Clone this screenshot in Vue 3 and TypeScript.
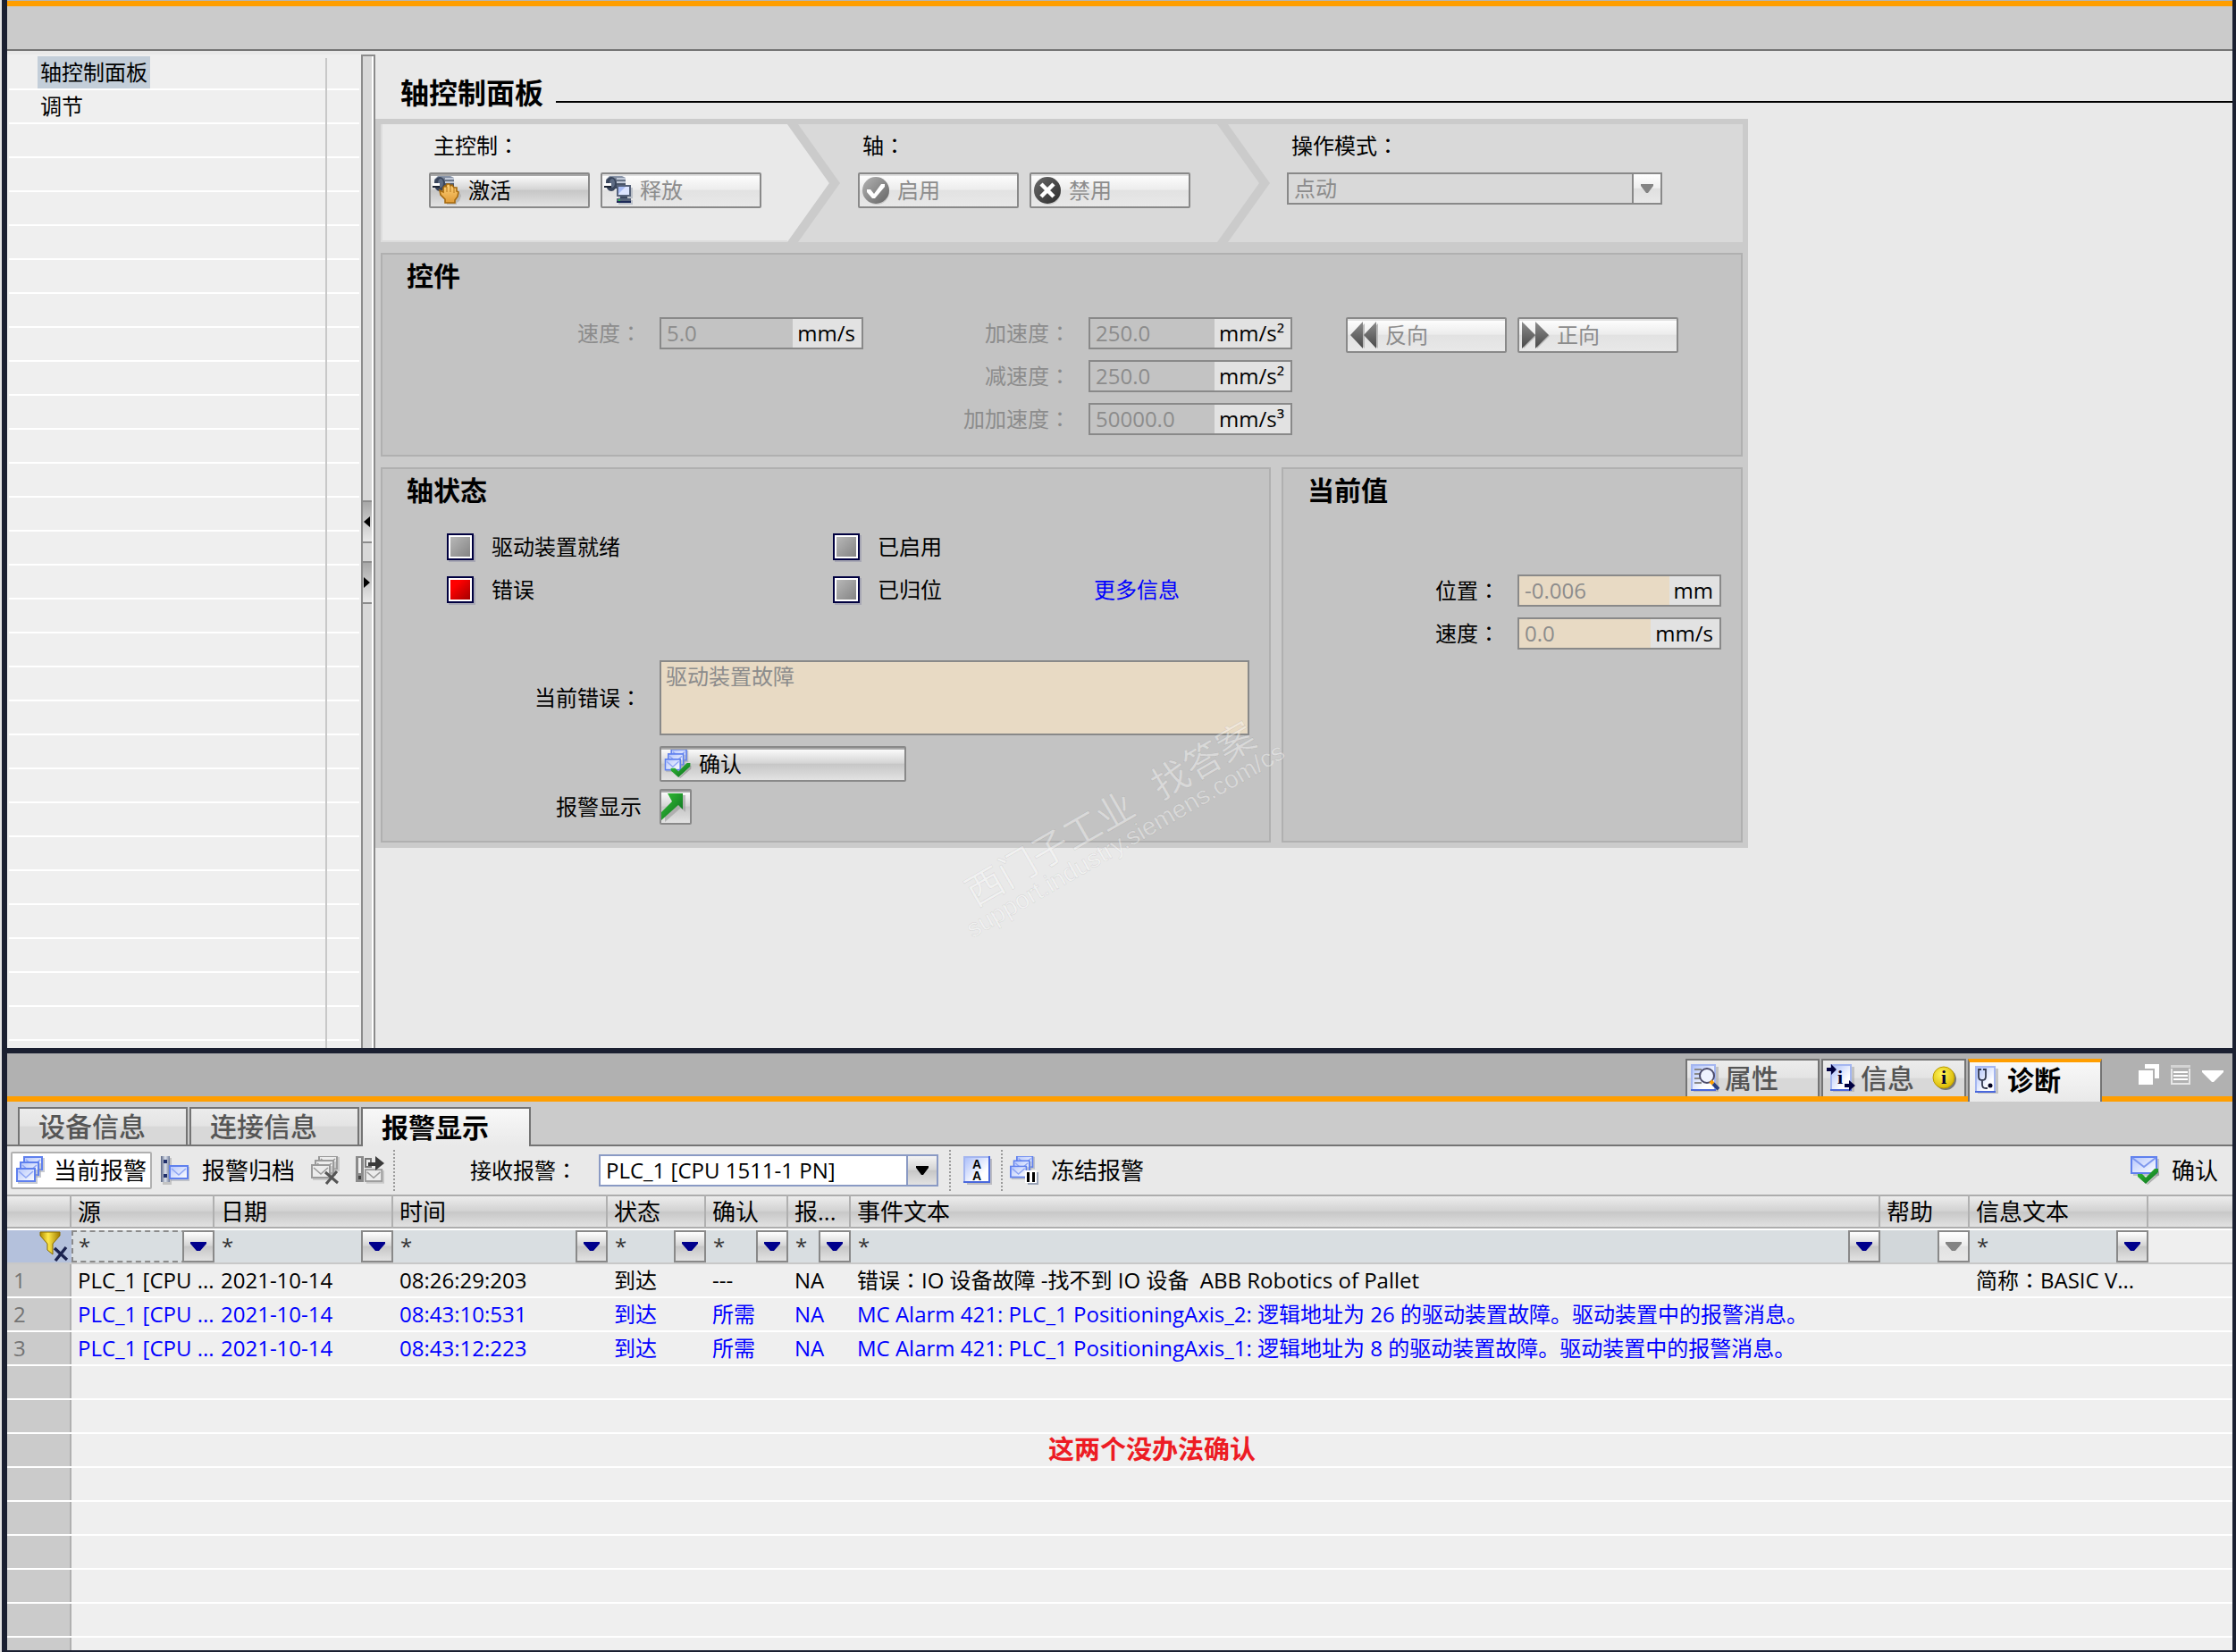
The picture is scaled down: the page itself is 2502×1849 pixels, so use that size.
<script setup lang="ts">
import { h, ref } from 'vue'

/* Text in which the full-width colon is set centred in its em box. */
const Txt = (props: { t: string }) =>
  props.t.split(/(：)/).map((part) => (part === '：' ? h('span', { class: 'cjk-colon' }, part) : part))
Txt.props = ['t']

interface Alarm {
  source: string
  date: string
  time: string
  state: string
  ack: string
  alarmClass: string
  event: string
  info: string
  pending: boolean
}

const navItems = ['轴控制面板', '调节']
const activeNav = ref('轴控制面板')

const dynamics = [
  { id: 'acc', label: '加速度：', value: '250.0', unit: 'mm/s²' },
  { id: 'dec', label: '减速度：', value: '250.0', unit: 'mm/s²' },
  { id: 'jerk', label: '加加速度：', value: '50000.0', unit: 'mm/s³' },
]

const actuals = [
  { id: 'pos', label: '位置：', value: '-0.006', unit: 'mm' },
  { id: 'vel', label: '速度：', value: '0.0', unit: 'mm/s' },
]

const lamps = [
  { id: 'ready', label: '驱动装置就绪', on: false },
  { id: 'enabled', label: '已启用', on: false },
  { id: 'error', label: '错误', on: true },
  { id: 'homed', label: '已归位', on: false },
]

const subTabs = ['设备信息', '连接信息', '报警显示']
const activeSub = ref('报警显示')

const columns = [
  { title: '源', width: '160px', filter: 'focus' },
  { title: '日期', width: '200px', filter: 'on' },
  { title: '时间', width: '240px', filter: 'on' },
  { title: '状态', width: '110px', filter: 'on' },
  { title: '确认', width: '92px', filter: 'on' },
  { title: '报...', width: '70px', filter: 'on' },
  { title: '事件文本', width: 'auto', filter: 'on' },
  { title: '帮助', width: '100px', filter: 'off' },
  { title: '信息文本', width: '200px', filter: 'on' },
]

const alarms: Alarm[] = [
  { source: 'PLC_1 [CPU ...', date: '2021-10-14', time: '08:26:29:203', state: '到达', ack: '---', alarmClass: 'NA', event: '错误：IO 设备故障 -找不到 IO 设备  ABB Robotics of Pallet', info: '简称：BASIC V...', pending: false },
  { source: 'PLC_1 [CPU ...', date: '2021-10-14', time: '08:43:10:531', state: '到达', ack: '所需', alarmClass: 'NA', event: 'MC Alarm 421: PLC_1 PositioningAxis_2: 逻辑地址为 26 的驱动装置故障。驱动装置中的报警消息。', info: '', pending: true },
  { source: 'PLC_1 [CPU ...', date: '2021-10-14', time: '08:43:12:223', state: '到达', ack: '所需', alarmClass: 'NA', event: 'MC Alarm 421: PLC_1 PositioningAxis_1: 逻辑地址为 8 的驱动装置故障。驱动装置中的报警消息。', info: '', pending: true },
]
</script>

<template>
  <div class="app">
    <svg class="defs" aria-hidden="true">
      <defs>
        <linearGradient id="g-env" x1="0" y1="0" x2="1" y2="1"><stop offset="0" stop-color="#b4c5fb" /><stop offset="1" stop-color="#ffffff" /></linearGradient>
        <linearGradient id="g-page" x1="0" y1="0" x2="1" y2="1"><stop offset="0" stop-color="#a9bdfa" /><stop offset="0.7" stop-color="#ffffff" /></linearGradient>
        <linearGradient id="g-motor" x1="0" y1="0" x2="0" y2="1"><stop offset="0" stop-color="#8c98ac" /><stop offset="1" stop-color="#2c3648" /></linearGradient>
        <linearGradient id="g-hand" x1="0" y1="0" x2="0" y2="1"><stop offset="0" stop-color="#ffd27a" /><stop offset="1" stop-color="#e09c38" /></linearGradient>
        <linearGradient id="g-grey" x1="0" y1="0" x2="1" y2="1"><stop offset="0" stop-color="#b4b4b4" /><stop offset="1" stop-color="#646464" /></linearGradient>
        <linearGradient id="g-dark" x1="0" y1="0" x2="1" y2="1"><stop offset="0" stop-color="#6a6a6a" /><stop offset="1" stop-color="#2c2c2c" /></linearGradient>
        <linearGradient id="g-wind" x1="0" y1="0" x2="0" y2="1"><stop offset="0" stop-color="#8c8c8c" /><stop offset="1" stop-color="#484848" /></linearGradient>
        <linearGradient id="g-green" x1="0" y1="0" x2="1" y2="1"><stop offset="0" stop-color="#35c435" /><stop offset="1" stop-color="#0a6a20" /></linearGradient>
        <linearGradient id="g-rack" x1="0" y1="0" x2="1" y2="0"><stop offset="0" stop-color="#5a6684" /><stop offset="0.5" stop-color="#dfe4ee" /><stop offset="1" stop-color="#6f7b98" /></linearGradient>
        <linearGradient id="g-gold" x1="0" y1="0" x2="1" y2="0"><stop offset="0" stop-color="#b08c00" /><stop offset="0.4" stop-color="#ffe94a" /><stop offset="1" stop-color="#a07c00" /></linearGradient>
        <radialGradient id="g-badge" cx="0.4" cy="0.35" r="0.7"><stop offset="0" stop-color="#fff75a" /><stop offset="1" stop-color="#d8b400" /></radialGradient>
      </defs>
      <symbol id="motor" viewBox="0 0 32 32">
        <path d="M6 0h14l4 2v12H6l-4-3V4z" fill="url(#g-motor)" />
        <path d="M14 2h10v2H14zM14 6h10v2H14z" fill="#c2cad8" />
        <ellipse cx="8" cy="9" rx="6" ry="8" fill="#3a465c" />
        <ellipse cx="9" cy="8" rx="3" ry="5" fill="#5e6c84" />
        <path d="M0 8h8v3H0z" fill="#fff" />
        <path d="M0 11h8v2H0z" fill="#1c2434" />
      </symbol>
      <symbol id="hand" viewBox="0 0 32 32">
        <path d="M14 32v-3l-6-6 1-4 3 2 0-7 2-2 2 2 1-3 3 0 1 2 3-1 1 4 3 2 2 4-2 6-3 2v2z" fill="#8a8a8a" opacity="0.4" transform="translate(2 0)" />
        <path d="M14 30v-4l-5-5-1-5 4 2 0-5 2-2 1 1 1-3 3 0 1 2 2-1 2 3 3 0 0 4 2 1-1 5-3 4v3z" fill="url(#g-hand)" stroke="#a5690e" stroke-width="1.6" />
        <path d="M16 12v6M20 11v7M24 13v6" stroke="#c08428" stroke-width="1.2" />
      </symbol>
      <symbol id="pc" viewBox="0 0 32 32">
        <path d="M16 13h16v12H16zM16 27h16v5H16z" fill="#aab0bc" opacity="0.7" />
        <rect x="15" y="11" width="14" height="11" fill="#dce4ff" stroke="#56627a" stroke-width="2" />
        <path d="M16 12h8l-8 8z" fill="#a9bdf5" />
        <path d="M18 23h8v2h-8z" fill="#3c4860" />
        <path d="M14 25h16v5H14z" fill="#56627a" /><path d="M14 28h16v2H14z" fill="#1d2a58" /><path d="M16 26h2v2h-2z" fill="#22c04a" />
      </symbol>
      <symbol id="letter" viewBox="0 0 24 18">
        <path d="M2 2h22v16H2z" fill="#a4a8b4" opacity="0.6" />
        <rect x="1" y="1" width="20" height="14" fill="url(#g-env)" stroke="#5f80ee" stroke-width="2" />
        <path d="M3 4l8 7 8-7" fill="none" stroke="#8fa6f4" stroke-width="1.6" />
      </symbol>
      <symbol id="letter-grey" viewBox="0 0 24 18">
        <path d="M2 2h22v16H2z" fill="#b4b4b4" opacity="0.6" />
        <rect x="1" y="1" width="20" height="14" fill="#ececec" stroke="#9a9a9a" stroke-width="2" />
        <path d="M3 4l8 7 8-7" fill="none" stroke="#9a9a9a" stroke-width="1.6" />
      </symbol>
      <symbol id="stack" viewBox="0 0 32 32">
        <use href="#letter" x="8" y="0" width="24" height="18" />
        <use href="#letter" x="4" y="6" width="24" height="18" />
        <use href="#letter" x="0" y="13" width="24" height="18" />
      </symbol>
      <symbol id="stack-grey" viewBox="0 0 32 32">
        <use href="#letter-grey" x="8" y="0" width="24" height="18" />
        <use href="#letter-grey" x="4" y="5" width="24" height="18" />
        <use href="#letter-grey" x="0" y="10" width="24" height="18" />
      </symbol>
      <symbol id="tick" viewBox="0 0 24 18">
        <path d="M2 8l8 9L24 3v4L11 18 4 12z" fill="#888" opacity="0.6" />
        <path d="M0 6h5l4 4L19 0h4v4L9 17 0 9z" fill="url(#g-green)" />
      </symbol>
    </svg>

    <header class="topbar"></header>

    <div class="editor">
      <nav class="sidebar">
        <ul>
          <li v-for="item in navItems" :key="item">
            <a href="#" :class="{ current: item === activeNav }" @click.prevent="activeNav = item">{{ item }}</a>
          </li>
        </ul>
      </nav>
      <div class="splitter">
        <button type="button" aria-label="Collapse left"><svg width="8" height="12"><path d="M8 0v12L1 6z" /></svg></button>
        <button type="button" aria-label="Collapse right"><svg width="8" height="12"><path d="M1 0v12l7-6z" /></svg></button>
      </div>

      <main class="main">
        <div class="title">
          <h1>轴控制面板</h1>
          <span class="rule"></span>
        </div>

        <div class="workspace">
          <div class="banner">
            <svg class="chevrons" viewBox="0 0 1524 132" preserveAspectRatio="none" aria-hidden="true">
              <path d="M0 0h1524v132H0z" fill="#d9d9d9" />
              <path d="M0 0h455l47 66-47 66H0z" fill="#e9e9e9" />
              <path d="M455 0h12l47 66-47 66h-12l47-66zM936 0h12l47 66-47 66h-12l47-66z" fill="#cbcbcb" />
              <path d="M0 131h455M1 0v132" stroke="#dcdcdc" stroke-width="2" />
            </svg>
            <section class="step">
              <p><Txt t="主控制：" /></p>
              <div class="controls">
                <button type="button" class="btn">
                  <svg class="ic" viewBox="0 0 32 32"><use href="#motor" /><use href="#hand" /></svg>激活
                </button>
                <button type="button" class="btn" disabled>
                  <svg class="ic" viewBox="0 0 32 32"><use href="#motor" /><use href="#pc" /></svg>释放
                </button>
              </div>
            </section>
            <section class="step">
              <p><Txt t="轴：" /></p>
              <div class="controls">
                <button type="button" class="btn" disabled>
                  <svg class="ic" viewBox="0 0 32 32"><circle cx="17" cy="18" r="14" fill="#aaa" opacity="0.5" /><circle cx="16" cy="16" r="15" fill="url(#g-grey)" /><path d="M6 15h4l4 5 8-11h4v3L15 25h-3L6 18z" fill="#fff" /></svg>启用
                </button>
                <button type="button" class="btn" disabled>
                  <svg class="ic" viewBox="0 0 32 32"><circle cx="17" cy="18" r="14" fill="#aaa" opacity="0.5" /><circle cx="16" cy="16" r="15" fill="url(#g-dark)" /><path d="M9 9l14 14M23 9L9 23" stroke="#fff" stroke-width="4.5" /></svg>禁用
                </button>
              </div>
            </section>
            <section class="step">
              <label for="mode"><Txt t="操作模式：" /></label>
              <div class="controls">
                <div class="combo mode">
                  <select id="mode" disabled><option>点动</option></select>
                  <span class="drop"><svg width="14" height="10"><path d="M0 0h14v2L8 10H6L0 2z" fill="#848484" /></svg></span>
                </div>
              </div>
            </section>
          </div>

          <section class="panel">
            <h2>控件</h2>
            <div class="jog">
              <div class="fields speed">
                <div class="field dim">
                  <label for="speed"><Txt t="速度：" /></label>
                  <div class="value"><input id="speed" value="5.0" disabled /><span>mm/s</span></div>
                </div>
              </div>
              <div class="fields dyn">
                <div v-for="f in dynamics" :key="f.id" class="field dim">
                  <label :for="f.id"><Txt :t="f.label" /></label>
                  <div class="value"><input :id="f.id" :value="f.value" disabled /><span>{{ f.unit }}</span></div>
                </div>
              </div>
              <div class="controls moves">
                <button type="button" class="btn" disabled>
                  <svg class="ic" viewBox="0 0 32 32"><path d="M17 3v28L3 17zM32 3v28L18 17z" fill="#bbb" /><path d="M15 1v30L1 16zM30 1v30L16 16z" fill="url(#g-wind)" /></svg>反向
                </button>
                <button type="button" class="btn" disabled>
                  <svg class="ic" viewBox="0 0 32 32"><path d="M3 3v28l14-14zM18 3v28l14-14z" fill="#bbb" /><path d="M1 1v30l15-15zM16 1v30l15-15z" fill="url(#g-wind)" /></svg>正向
                </button>
              </div>
            </div>
          </section>

          <div class="row">
            <section class="panel status">
              <h2>轴状态</h2>
              <div class="lamps">
                <div v-for="l in lamps" :key="l.id" class="lamp">
                  <input :id="l.id" type="checkbox" :checked="l.on" disabled />
                  <label :for="l.id">{{ l.label }}</label>
                </div>
                <a href="#" class="more" @click.prevent>更多信息</a>
              </div>
              <div class="line error">
                <label for="current-error"><Txt t="当前错误：" /></label>
                <textarea id="current-error" readonly value="驱动装置故障"></textarea>
              </div>
              <div class="line confirm">
                <span class="lead"></span>
                <button type="button" class="btn wide">
                  <svg class="ic" viewBox="0 0 32 32"><use href="#stack" y="-1" height="27" width="30" /><use href="#tick" x="8" y="15" width="24" height="17" /></svg>确认
                </button>
              </div>
              <div class="line">
                <span id="alarm-view" class="lead">报警显示</span>
                <button type="button" class="btn square" aria-labelledby="alarm-view">
                  <svg width="32" height="36" viewBox="0 0 32 36"><path d="M9 5h18v19l-5-5L4 35v-7l12-13z" fill="#999" opacity="0.6" /><path d="M7 3h17v18l-5-5L0 33v-9l12-12z" fill="url(#g-green)" /></svg>
                </button>
              </div>
            </section>

            <section class="panel actual">
              <h2>当前值</h2>
              <div class="fields">
                <div v-for="f in actuals" :key="f.id" class="field">
                  <label :for="f.id"><Txt :t="f.label" /></label>
                  <div class="value tan"><input :id="f.id" :value="f.value" disabled /><span>{{ f.unit }}</span></div>
                </div>
              </div>
            </section>
          </div>
        </div>

        <div class="watermark">
          <p><span>西门子工业</span><span>找答案</span></p>
          <p class="url">support.industry.siemens.com/cs</p>
        </div>
      </main>
    </div>

    <section class="inspector">
      <div class="views">
        <button type="button" class="view props">
          <svg class="ic" viewBox="0 0 32 32"><path d="M3 3h28v28H3z" fill="#a8a8a8" opacity="0.6" /><path d="M1 1h26v28H1z" fill="url(#g-page)" stroke="#a4b6f0" stroke-width="2" /><path d="M0 28h28v2H0z" fill="#4a68dc" /><path d="M4 6h8M4 11h6M4 16h6M4 21h8" stroke="#888" stroke-width="2" /><circle cx="18" cy="13" r="8" fill="#eef2ff" stroke="#4a4a6a" stroke-width="2" /><path d="M22 19l3 3" stroke="#ffa000" stroke-width="4" /><path d="M25 22l6 6" stroke="#2a4080" stroke-width="4" /></svg>属性
        </button>
        <button type="button" class="view info">
          <svg class="ic" viewBox="0 0 32 32"><path d="M7 3h24v28H7z" fill="#a8a8a8" opacity="0.6" /><path d="M5 1h22v28H5z" fill="url(#g-page)" stroke="#a4b6f0" stroke-width="2" /><path d="M4 28h24v2H4z" fill="#4a68dc" /><path d="M0 4h5V0l6 6-6 6V8H0zM20 22h5v-4l7 6-7 6v-4h-5z" fill="#000040" /><text x="12" y="22" class="serif-i">i</text></svg>信息
          <svg class="badge" width="28" height="28" viewBox="0 0 28 28"><circle cx="15" cy="15" r="12" fill="#777" /><circle cx="13" cy="13" r="12" fill="url(#g-badge)" stroke="#b89a00" /><text x="10" y="20" class="serif-i">i</text></svg>
        </button>
        <button type="button" class="view diag">
          <svg class="ic" viewBox="0 0 32 32"><path d="M3 3h23v28H3z" fill="#a8a8a8" opacity="0.6" /><path d="M1 1h21v28H1z" fill="url(#g-page)" stroke="#a4b6f0" stroke-width="2" /><path d="M0 28h23v2H0z" fill="#4a68dc" /><path d="M7 4H4v8q0 4 4 4t4-4V4H9M8 16v5q0 4 4 4h2" fill="none" stroke="#333a50" stroke-width="1.8" /><circle cx="17" cy="22" r="2.5" fill="#000020" /></svg>诊断
        </button>
        <div class="win">
          <svg width="24" height="24"><path d="M8 0h16v16h-5V5H8z" fill="#fff" /><path d="M1 7h16v16H1z" fill="#fff" /></svg>
          <svg width="24" height="24"><path d="M1 1h22v3H1z" fill="#d4d4d4" /><path d="M2 5v17h20V5" fill="none" stroke="#e6e6e6" stroke-width="2" /><path d="M4 9h16M4 13h16M4 17h16" stroke="#fff" stroke-width="2" /></svg>
          <svg width="24" height="24"><path d="M0 7h24v2L13 20h-2L0 9z" fill="#fff" /></svg>
        </div>
      </div>

      <div class="subtabs">
        <button v-for="t in subTabs" :key="t" type="button" :class="{ on: t === activeSub }" @click="activeSub = t">{{ t }}</button>
      </div>

      <div class="toolbar">
        <button type="button" class="tool pressed"><svg class="ic" viewBox="0 0 32 32"><use href="#stack" /></svg>当前报警</button>
        <button type="button" class="tool"><svg class="ic" viewBox="0 0 32 32"><path d="M2 2h10v30H2z" fill="#aaa" opacity="0.6" /><path d="M0 0h10v29H0z" fill="url(#g-rack)" /><path d="M3 4h4v4H3zM3 20h4v4H3z" fill="#20306c" /><use href="#letter" x="9" y="10" width="24" height="18" /></svg>报警归档</button>
        <button type="button" class="tool icon" disabled aria-label="Empty archive"><svg class="ic" viewBox="0 0 32 32"><use href="#stack-grey" y="-1" /><path d="M16 18l14 12M29 17L17 31" stroke="#555" stroke-width="3" /></svg></button>
        <button type="button" class="tool icon" disabled aria-label="Export archive"><svg class="ic" viewBox="0 0 32 32"><path d="M0 0h9v29H0z" fill="#8a8a8a" /><path d="M3 2h3v17H3z" fill="#eee" /><path d="M3 22h3v4H3z" fill="#444" /><path d="M11 3h6v9h-6z" fill="none" stroke="#777" stroke-width="2" /><use href="#letter-grey" x="10" y="14" width="22" height="17" /><path d="M14 7h8V0l10 8-10 8v-5h-8z" fill="#3a3a3a" /></svg></button>
        <i class="sep"></i>
        <label class="recv" for="receive"><Txt t="接收报警：" /></label>
        <div class="combo plc">
          <select id="receive"><option>PLC_1 [CPU 1511-1 PN]</option></select>
          <span class="drop"><svg width="14" height="10"><path d="M0 0h14v2L8 10H6L0 2z" fill="#000" /></svg></span>
        </div>
        <i class="sep"></i>
        <button type="button" class="tool icon aa" aria-label="Sort"><svg class="ic" viewBox="0 0 32 32"><path d="M4 3h28v29H4z" fill="#a8a8b0" opacity="0.7" /><path d="M1 1h28v28H1z" fill="url(#g-page)" stroke="#a4b6f0" stroke-width="2" /><path d="M28 0h2v30H0v-2h28z" fill="#4a68dc" /><text x="15" y="14" class="aa-text">A</text><text x="15" y="27" class="aa-text">A</text></svg></button>
        <i class="sep"></i>
        <button type="button" class="tool freeze"><svg class="ic" viewBox="0 0 32 32"><use href="#stack" y="-1" width="28" height="28" /><path d="M20 18h12v14H20z" fill="#9aa4b8" /><path d="M17 16h13v14H17z" fill="#fff" /><path d="M19 18h3v11h-3zM25 18h3v11h-3z" fill="#000" /></svg>冻结报警</button>
        <span class="spring"></span>
        <button type="button" class="tool ack"><svg class="ic" viewBox="0 0 32 32"><path d="M3 3h29v19H3z" fill="#a4a8b4" opacity="0.6" /><path d="M1 1h28v18H1z" fill="url(#g-env)" stroke="#5f80ee" stroke-width="2" /><path d="M2 2l13 10L28 2" fill="none" stroke="#7f98ee" stroke-width="2" /><use href="#tick" x="8" y="14" width="24" height="18" /></svg>确认</button>
      </div>

      <div class="grid">
        <table>
          <colgroup>
            <col class="num" />
            <col v-for="c in columns" :key="c.title" :style="{ width: c.width }" />
            <col class="rest" />
          </colgroup>
          <thead>
            <tr class="heads">
              <th></th>
              <th v-for="c in columns" :key="c.title" scope="col"><div>{{ c.title }}</div></th>
              <th class="end"></th>
            </tr>
            <tr class="filters">
              <td class="funnel">
                <svg width="34" height="34" viewBox="0 0 34 34"><path d="M1 1h22v4l-8 9v12l-6-5v-7L1 5z" fill="url(#g-gold)" stroke="#8a6c00" /><path d="M17 19l14 13M30 18L18 33" stroke="#1c2450" stroke-width="3.4" /></svg>
              </td>
              <td v-for="c in columns" :key="c.title" :class="c.filter">
                <div class="filter">
                  <input :value="c.filter === 'off' ? '' : '*'" :aria-label="c.title" :disabled="c.filter === 'off'" />
                  <button type="button" :disabled="c.filter === 'off'" :aria-label="c.title">
                    <svg width="18" height="10"><path d="M0 0h18v2L11 10H7L0 2z" /></svg>
                  </button>
                </div>
              </td>
              <td class="end"></td>
            </tr>
          </thead>
          <tbody>
            <tr v-for="(a, i) in alarms" :key="i" :class="{ pending: a.pending }">
              <td class="no">{{ i + 1 }}</td>
              <td>{{ a.source }}</td>
              <td>{{ a.date }}</td>
              <td>{{ a.time }}</td>
              <td>{{ a.state }}</td>
              <td>{{ a.ack }}</td>
              <td>{{ a.alarmClass }}</td>
              <td><Txt :t="a.event" /></td>
              <td></td>
              <td><Txt :t="a.info" /></td>
              <td></td>
            </tr>
          </tbody>
        </table>
        <p class="note">这两个没办法确认</p>
      </div>
    </section>
  </div>
</template>

<style>
body {
  background: #1b2031;
}
.cjk-colon {
  font-family: "Noto Sans CJK TC", sans-serif;
  line-height: 0;
}
</style>

<style scoped>
.app {
  box-sizing: border-box;
  min-height: 100vh;
  display: flex;
  flex-direction: column;
  padding: 0 4px 2px 6px;
  border-left: 2px solid #e4e4e4;
  background: #1b2031;
  font: 24px/36px "Open Sans", "Noto Sans CJK SC", sans-serif;
  color: #000;
}
.app *,
.app *::before {
  box-sizing: border-box;
}
.defs {
  position: absolute;
  width: 0;
  height: 0;
}
button,
input,
select,
textarea {
  font: inherit;
  color: inherit;
  margin: 0;
  padding: 0;
  border: 0;
  border-radius: 0;
  background: none;
}
h1,
h2,
p,
ul {
  margin: 0;
  padding: 0;
}
.ic {
  width: 32px;
  height: 32px;
  flex: none;
}

.topbar {
  height: 57px;
  border-top: 1px solid #b4b4b4;
  border-bottom: 2px solid #747474;
  background: #cbcbcb;
  box-shadow: inset 0 6px #ff9e00;
}
.editor {
  flex: 1;
  display: flex;
  background: #e9e9e9;
}

.sidebar {
  width: 396px;
  margin-top: 4px;
  padding: 2px;
  padding-bottom: 0;
  display: flex;
  background: #efefef;
}
.sidebar ul {
  flex: 1;
  list-style: none;
  background:
    linear-gradient(#c8c8c8, #c8c8c8) 354px 2px / 2px 100% no-repeat,
    repeating-linear-gradient(transparent 0 36px, #fff 36px 38px);
}
.sidebar li {
  height: 38px;
  padding-left: 32px;
}
.sidebar a {
  display: inline-block;
  height: 36px;
  line-height: 36px;
  padding: 0 3px;
  color: #000;
  text-decoration: none;
}
.sidebar a.current {
  background: #c3ced9;
}
.splitter {
  width: 16px;
  margin-top: 4px;
  display: flex;
  flex-direction: column;
  justify-content: center;
  gap: 20px;
  padding-right: 2px;
  border: 2px solid #8c8c8c;
  border-bottom: 0;
  background: linear-gradient(to right, #d8d8d8 10px, #fff 10px);
}
.splitter button {
  height: 48px;
  display: flex;
  align-items: center;
  border: solid #8c8c8c;
  border-width: 2px 0;
  background: linear-gradient(#a8a8a8, #e8e8e8);
}

.main {
  flex: 1;
  position: relative;
}
.title {
  display: flex;
  height: 76px;
  padding: 26px 0 0 28px;
  gap: 14px;
}
.title h1 {
  font-size: 32px;
  line-height: 42px;
}
.rule {
  flex: 1;
  height: 2px;
  margin-top: 30px;
  background: #000;
}
.workspace {
  width: 1536px;
  padding: 6px;
  display: flex;
  flex-direction: column;
  gap: 12px;
  background: #cbcbcb;
}
.banner {
  position: relative;
  height: 132px;
  display: flex;
  padding-left: 54px;
}
.chevrons {
  position: absolute;
  inset: 0;
  width: 100%;
  height: 100%;
}
.step {
  position: relative;
  width: 480px;
  padding-top: 6px;
}
.step p,
.step label {
  display: block;
  padding-left: 5px;
  margin-bottom: 12px;
}
.controls {
  display: flex;
  gap: 12px;
}
.btn {
  width: 180px;
  height: 40px;
  display: flex;
  align-items: center;
  gap: 8px;
  padding-left: 2px;
  line-height: 32px;
  border: 2px solid #898989;
  border-radius: 2px;
  background: linear-gradient(#fff, #d4d4d4 48%, #c6c6c6 50%, #e2e2e2);
  box-shadow: inset 0 2px #a8a8a8;
}
.btn:disabled {
  color: #8c8c8c;
  background: linear-gradient(#fff, #ececec 48%, #e2e2e2 50%, #e8e8e8);
  box-shadow: inset 0 2px #e0e0e0;
}
.btn.wide {
  width: 276px;
}
.btn.square {
  width: 36px;
  padding: 0;
}
.combo {
  display: flex;
  height: 36px;
  border: 2px solid #898989;
}
.combo select {
  flex: 1;
  appearance: none;
  padding-left: 6px;
  line-height: 32px;
  opacity: 1;
}
.combo .drop {
  width: 34px;
  display: flex;
  align-items: center;
  justify-content: center;
  border-left: 2px solid #898989;
  background: linear-gradient(#fff, #eee 48%, #e0e0e0 50%, #e8e8e8);
}
.mode {
  width: 420px;
  color: #8c8c8c;
}
.mode .drop {
  width: 32px;
}

.panel {
  border: 2px solid #b0b0b0;
  background: #c3c3c3;
  padding-top: 4px;
}
.panel h2 {
  padding-left: 27px;
  font-size: 30px;
  line-height: 40px;
}
.jog {
  display: flex;
  padding: 26px 0 22px;
}
.fields {
  display: flex;
  flex-direction: column;
  gap: 12px;
}
.speed {
  width: 538px;
}
.dyn {
  width: 480px;
}
.moves {
  margin-left: 60px;
}
.field {
  height: 36px;
  display: flex;
  justify-content: flex-end;
  gap: 20px;
}
.dim label {
  color: #8c8c8c;
}
.value {
  width: 228px;
  height: 36px;
  display: flex;
  border: 2px solid #898989;
  line-height: 32px;
}
.value input {
  flex: 1;
  min-width: 0;
  padding-left: 6px;
  color: #8c8c8c;
}
.value span {
  padding: 0 7px 0 5px;
  background: #e2e2e2;
}
.tan input {
  background: #e8dac4;
}
.row {
  display: flex;
  gap: 12px;
  height: 420px;
}
.status {
  flex: 1;
}
.actual {
  width: 516px;
}
.actual .fields {
  padding: 74px 22px 0 0;
}
.lamps {
  display: grid;
  grid-template-columns: 432px 292px auto;
  grid-template-rows: 30px 30px;
  row-gap: 18px;
  padding: 28px 0 0 72px;
}
.lamp {
  display: flex;
  align-items: center;
  gap: 20px;
  line-height: 30px;
}
.lamp:nth-child(3) {
  grid-area: 2 / 1;
}
.lamp:nth-child(4) {
  grid-area: 2 / 2;
}
.more {
  grid-area: 2 / 3;
  line-height: 30px;
  color: #0000ff;
  text-decoration: none;
}
.lamp input {
  appearance: none;
  width: 30px;
  height: 30px;
  border: 2px solid #000040;
  box-shadow: inset 0 0 0 2px #fff, 2px 2px #a8a8b4;
  background: linear-gradient(135deg, #bcbcbc, #808080);
}
.lamp input:checked {
  background: linear-gradient(135deg, #ff0000 30%, #980000);
}
.line {
  display: flex;
  align-items: center;
  gap: 20px;
}
.line label,
.lead {
  width: 290px;
  text-align: right;
}
.error {
  margin-top: 64px;
}
.error textarea {
  width: 660px;
  height: 84px;
  padding: 0 5px;
  line-height: 32px;
  resize: none;
  border: 2px solid #898989;
  background: #e8dac4;
  color: #8c8c8c;
}
.confirm {
  margin: 12px 0 8px;
}

.watermark {
  position: absolute;
  left: 631px;
  top: 833px;
  width: 400px;
  height: 72px;
  transform: rotate(-30deg);
  color: rgba(255, 255, 255, 0.4);
  -webkit-text-stroke: 1px rgba(0, 0, 0, 0.07);
  pointer-events: none;
}
.watermark p {
  display: flex;
  justify-content: center;
  gap: 30px;
  font-size: 42px;
  line-height: 36px;
  white-space: nowrap;
}
.watermark .url {
  font: 28px/34px "Liberation Sans", sans-serif;
}

.inspector {
  height: 674px;
  display: flex;
  flex-direction: column;
  border-top: 6px solid #1b2031;
  background: #e9e9e9;
}
.views {
  height: 54px;
  padding-top: 6px;
  display: flex;
  justify-content: flex-end;
  align-items: flex-start;
  gap: 2px;
  background: linear-gradient(#b1b1b1 48px, #ff9e00 48px);
}
.view {
  height: 42px;
  display: flex;
  align-items: center;
  gap: 6px;
  padding-left: 4px;
  border: 2px solid #747474;
  border-bottom: 0;
  background: linear-gradient(#ececec, #e4e4e4 48%, #d8d8d8 50%);
  color: #555;
  font-size: 30px;
  font-weight: 500;
  line-height: 38px;
}
.props {
  width: 150px;
}
.info {
  width: 162px;
}
.diag {
  width: 150px;
  height: 48px;
  gap: 4px;
  padding: 0 0 4px 6px;
  border-top: 4px solid #ff9e00;
  background: linear-gradient(#f8f8f8, #e9e9e9);
  color: #000;
  font-weight: 700;
}
.badge {
  margin-left: 14px;
}
.serif-i {
  font: bold 22px "Liberation Serif", serif;
  fill: #000030;
}
.win {
  display: flex;
  gap: 12px;
  margin: 6px 10px 0 38px;
}
.subtabs {
  height: 50px;
  padding: 6px 0 0 12px;
  display: flex;
  gap: 2px;
  border-bottom: 2px solid #747474;
  background: #cbcbcb;
}
.subtabs button {
  width: 190px;
  height: 42px;
  padding-left: 21px;
  text-align: left;
  border: 2px solid #747474;
  border-bottom: 0;
  background: linear-gradient(#ececec, #e4e4e4 48%, #d8d8d8 50%);
  color: #555;
  font-size: 30px;
  font-weight: 500;
  line-height: 38px;
}
.subtabs button.on {
  height: 44px;
  background: linear-gradient(#f8f8f8, #e9e9e9);
  color: #000;
  font-weight: 700;
}

.toolbar {
  flex: none;
  height: 54px;
  padding-left: 4px;
  display: flex;
  align-items: center;
}
.tool {
  height: 42px;
  display: flex;
  align-items: center;
  gap: 14px;
  padding-left: 10px;
  font-size: 26px;
}
.tool.icon {
  padding: 0;
  margin-left: 18px;
}
.tool.pressed {
  width: 158px;
  padding-left: 4px;
  gap: 10px;
  border: 2px solid #b0b0b0;
  border-radius: 2px;
  background: #fff;
}
.tool.aa {
  margin-left: 14px;
}
.tool.freeze {
  padding-left: 8px;
}
.tool.ack {
  padding-right: 16px;
}
.aa-text {
  font: bold 14px "Liberation Sans", sans-serif;
  text-anchor: middle;
}
.sep {
  height: 46px;
  border-left: 2px dotted #9a9a9a;
}
.icon + .sep {
  margin-left: 10px;
}
.recv {
  margin: 0 24px 0 84px;
}
.plc {
  width: 380px;
  margin-right: 12px;
  border-color: #8a9ac4;
  background: #fff;
}
.plc .drop {
  background: linear-gradient(#f4f4f4, #d4d4d4 48%, #c6c6c6 50%, #e2e2e2);
  border-left-color: #8a9ac4;
}
.spring {
  flex: 1;
}

.grid {
  flex: 1;
  position: relative;
  overflow: hidden;
  background:
    repeating-linear-gradient(#fff 0 2px, transparent 2px 38px),
    linear-gradient(to right, #cbcbcb 70px, #b0b0b0 70px 72px, #efefef 72px);
}
table {
  width: 100%;
  table-layout: fixed;
  border-collapse: separate;
  border-spacing: 0;
}
.num {
  width: 72px;
}
.rest {
  width: 94px;
}
th,
td {
  padding: 0;
  height: 38px;
  text-align: left;
  white-space: pre;
}
.heads th {
  height: 40px;
  border-bottom: 2px solid #fff;
  font-size: 26px;
  font-weight: 400;
  background: linear-gradient(#f0f0f0, #d2d2d2 48%, #c8c8c8 52%, #e4e4e4);
  box-shadow: inset -2px 0 #b0b0b0, inset 0 2px #adadad, inset 0 -2px #adadad;
}
.heads .end {
  box-shadow: inset 0 2px #adadad, inset 0 -2px #adadad;
}
.heads div {
  padding-left: 7px;
  line-height: 38px;
  overflow: hidden;
}
.filters td {
  border-bottom: 2px solid #c8c8c8;
  background: #d9dee1;
}
.filters .funnel {
  padding-left: 36px;
  background: #b4c1dc;
}
.filters svg {
  display: block;
}
.filters .off {
  background: #d2d7da;
}
.filters .end {
  background: #efefef;
}
.filter {
  display: flex;
  height: 36px;
}
.focus .filter {
  outline: 2px dashed #8a8a8a;
  outline-offset: -2px;
}
.filter input {
  flex: 1;
  min-width: 0;
  padding-left: 8px;
  line-height: 34px;
  color: #333;
}
.filter button {
  width: 36px;
  display: flex;
  align-items: center;
  justify-content: center;
  border: 2px solid #898989;
  background: linear-gradient(#fff, #d4d4d4 48%, #c6c6c6 50%, #e2e2e2);
  fill: #00008c;
}
.filter button:disabled {
  fill: #848484;
  background: linear-gradient(#fff, #ececec 48%, #e2e2e2 50%, #e8e8e8);
}
tbody td {
  padding-left: 7px;
  line-height: 36px;
  border-bottom: 2px solid #fff;
}
tbody .pending td {
  color: #0000ff;
}
tbody td.no,
tbody .pending td.no {
  color: #747474;
}
.note {
  position: absolute;
  left: 1165px;
  top: 266px;
  font-size: 29px;
  font-weight: 700;
  line-height: 38px;
  color: #ed1c24;
}
</style>
